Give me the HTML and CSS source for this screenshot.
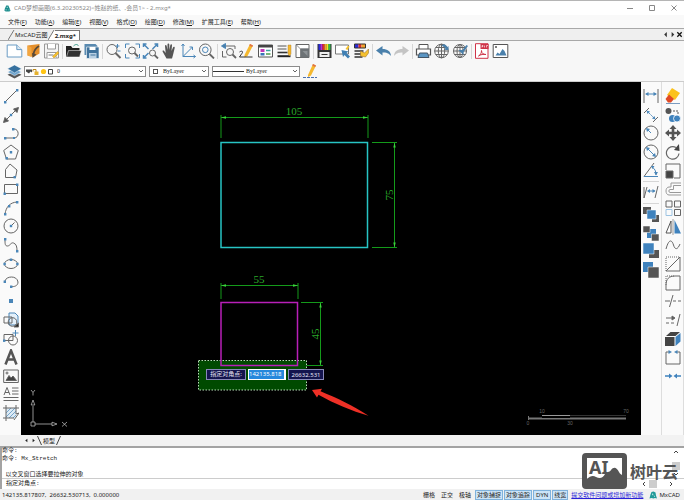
FILE: index.html
```html
<!DOCTYPE html>
<html lang="zh-CN">
<head>
<meta charset="utf-8">
<title>CAD梦想画图</title>
<link rel="stylesheet" href="styles.css">
</head>
<body>
<header class="titlebar">
  <svg class="app-logo" viewBox="0 0 16 16"><path fill="#1b8c8c" d="M2 8l3-7h5l3 7 2 5-3 2H4l-3-2z"/><path fill="#8fd0cf" d="M6 4h3v3H6zM3 10h4v2H3zM10 10h3v2h-3z"/></svg>
  <h1 class="title">CAD梦想画图(6.3.20230522)&lt;姓赵的纸、,会员1&gt; - 2.mxg*</h1>
  <div class="window-buttons">
    <button aria-label="最小化"><svg viewBox="0 0 8 8"><path d="M1 4.5h6"/></svg></button>
    <button aria-label="最大化"><svg viewBox="0 0 8 8"><path d="M1.5 1.5h5v5h-5z"/></svg></button>
    <button aria-label="关闭"><svg viewBox="0 0 8 8"><path d="M1.5 1.5l5 5m0-5l-5 5"/></svg></button>
  </div>
</header>
<nav class="menubar">
  <button>文件(<u>F</u>)</button><button>功能(<u>A</u>)</button><button>编辑(<u>E</u>)</button><button>视图(<u>V</u>)</button><button>格式(<u>O</u>)</button><button>绘图(<u>D</u>)</button><button>修改(<u>M</u>)</button><button>扩展工具(<u>E</u>)</button><button>帮助(<u>H</u>)</button>
</nav>
<div class="doctabs">
  <svg class="slant" viewBox="0 0 7 11"><path d="M0 11L6 1"/></svg>
  <button class="doctab">MxCAD云图</button>
  <svg class="slant slant-active" viewBox="0 0 7 11"><path class="fill" d="M0 11L6 1h1v10z"/><path d="M0 11L6 1"/></svg>
  <button class="doctab doctab-active">2.mxg*</button>
  <div class="doctab-nav">
    <button aria-label="上一个"><svg viewBox="0 0 8 8"><path d="M5.5 1v6L2.5 4z"/></svg></button>
    <button aria-label="下一个"><svg viewBox="0 0 8 8"><path d="M3 1v6l3-3z"/></svg></button>
    <button aria-label="关闭标签"><svg viewBox="0 0 8 8"><path class="bold" d="M1.5 1.5l5 5m0-5l-5 5"/></svg></button>
  </div>
</div>

<div class="toolbar" role="toolbar">
  <button aria-label="新建"><svg viewBox="0 0 16 16"><path d="M.7 2h9.6l5 4.6V14H.7z" fill="#fff" stroke="#6b9cc4"/><path d="M10.3 2v4.6h5" fill="#d9e8f4" stroke="#6b9cc4"/></svg></button>
  <button aria-label="打开云图"><svg viewBox="0 0 16 16"><path d="M2 2.500L14 1v9.500L8 14 2 12.500z" fill="#e58f2b"/><path d="M2 2.500l4 2V14l-4-1.500z" fill="#f2a640"/><path d="M13.500 3c-3 2-5 4.500-5.500 8" stroke="#5a4a38" stroke-width="1.800" fill="none"/><path d="M6.500 10l.5 5 4-3.500z" fill="#5a4a38"/></svg></button>
  <button aria-label="另存"><svg viewBox="0 0 16 16"><path d="M1 1h14v14H1z" fill="#f4f4f4" stroke="#999"/><path d="M4 1v5h8V1M3.500 15V9.500h9V15" fill="#fff" stroke="#999"/><path d="M5 12h5" stroke="#777"/><path d="M9 13.500l5-5 1.500 1.500-5 5z" fill="#f5c12e" stroke="#c08a1c" stroke-width=".5"/></svg></button>
  <i class="sep"></i>
  <button aria-label="打开"><svg viewBox="0 0 16 16"><path d="M.5 3h5l1.500 2h7v9H.5z" fill="#222"/><path d="M3 7.500h13L14 14H1z" fill="#333" stroke="#fff" stroke-width=".5"/><path d="M8 3c2-2 4-2 5 0" stroke="#3a9c8c" fill="none"/></svg></button>
  <button aria-label="保存"><svg viewBox="0 0 16 16"><path d="M1 1h11l2 2v9H1z" fill="#5a8ab0"/><path d="M3 4h12.500v11.500H3z" fill="#3f729c" stroke="#fff" stroke-width=".6"/><path d="M6 4h6v3H6z" fill="#fff"/><path d="M5.500 10h7.500v5H5.500z" fill="#b9d0e3"/><path d="M7 12h5" stroke="#3f729c"/></svg></button>
  <i class="sep"></i>
  <button aria-label="实时缩放"><svg viewBox="0 0 16 16" class="ln"><circle cx="6.500" cy="6.500" r="5"/><path d="M10 10l5 5" stroke-width="2"/><path d="M12 1v4M10 3h4M12 8h3" class="bl"/></svg></button>
  <button aria-label="窗口缩放"><svg viewBox="0 0 16 16" class="ln"><path d="M1 5V1h4M11 1h4v4M15 11v4h-4M5 15H1v-4" class="bl"/><circle cx="7.500" cy="7.500" r="3.500"/><path d="M10 10l3.500 3.500" stroke-width="2"/></svg></button>
  <button aria-label="全部缩放"><svg viewBox="0 0 16 16" class="ln"><path d="M1 4V1h3M1 1l5 5M12 1h3v3M15 1l-5 5M1 12v3h3M1 15l5-5" class="bl" stroke-width="1.500"/><circle cx="10" cy="10" r="3"/><path d="M12 12l3.500 3.500" stroke-width="1.800"/></svg></button>
  <button aria-label="平移"><svg viewBox="0 0 16 16"><path d="M5 15.500L1.200 8.800c-.6-1.300.8-1.700 1.500-.8L4.200 10 3.500 3c0-1.300 1.500-1.300 1.700 0L6 7V1.500c0-1.500 1.700-1.500 1.800 0V7l1-4.800c.3-1.300 1.800-1 1.700.3L10 8l1.500-3.500c.6-1.200 2-.6 1.700.6L11.500 12l-1 3.500z" fill="#555"/></svg></button>
  <button aria-label="坐标系"><svg viewBox="0 0 16 16" class="ln"><path d="M2.500 1v12.500H15M1 3l1.500-2L4 3M13 12l2 1.500-2 1.500" class="bl"/><path d="M2.500 13.500L12 4M9 4h3v3" class="bl"/></svg></button>
  <button aria-label="范围缩放"><svg viewBox="0 0 16 16" class="ln"><circle cx="6.800" cy="6.800" r="5.800"/><circle cx="6.800" cy="6.800" r="2.800" class="bl"/><path d="M11 11l4.500 4.500" stroke-width="1.800"/></svg></button>
  <i class="sep"></i>
  <button aria-label="上一视图"><svg viewBox="0 0 16 16" class="ln"><path d="M2 8v6h4M14.500 6V3H3" /><path d="M5 .5L1 3l4 2.500z" fill="#4a7fa8" class="bl"/><circle cx="9.500" cy="9" r="3.500"/><path d="M12 11.500l3.500 3.500" stroke-width="1.800"/></svg></button>
  <button aria-label="编辑"><svg viewBox="0 0 16 16"><path d="M6 12L11.500 1l3 1.500L9 13l-3 1.500z" fill="#f5b82e"/><path d="M11.500 1l3 1.500-.8 1.600-3-1.500z" fill="#e0704b"/><path d="M1 9c3-2 4 0 2 2l-2 3h13" stroke="#333" fill="none"/></svg></button>
  <button aria-label="图层特性"><svg viewBox="0 0 16 16"><path d="M1 2h14v12H1z" fill="#fff" stroke="#555"/><path d="M1 2h14v2.500H1z" fill="#444"/><path d="M3 6h4v3H3z" fill="#c237b8"/><path d="M3 10h4v2.500H3z" fill="#3874b8"/><path d="M8.500 7.500H13" stroke="#3aa6a0" stroke-width="1.500"/><path d="M8.500 11H13" stroke="#4b9c4b" stroke-width="1.500"/></svg></button>
  <button aria-label="线型"><svg viewBox="0 0 16 16"><path d="M1 3h9M1 6h9" stroke="#555"/><path d="M1 9.500h10" stroke="#333" stroke-width="1.600"/><path d="M1 13.200h13" stroke="#222" stroke-width="2"/><path d="M11.500 2h3v9l-1.500 2-1.500-2z" fill="#f5b82e" stroke="#a3732a" stroke-width=".4"/></svg></button>
  <button aria-label="图块"><svg viewBox="0 0 16 16"><path d="M1.500 1.500h13v13h-13z" fill="#fff" stroke="#666"/><path d="M2 2l4 4v8.500M6 6h8.500" fill="none" stroke="#666" stroke-width=".7"/><path d="M6 5.500h8.500v9H6z" fill="#6d7276"/><path d="M8 8h5v5z" fill="#8d9296"/></svg></button>
  <i class="sep"></i>
  <button aria-label="颜色"><svg viewBox="0 0 16 16"><path d="M1 1h14v14H1z" fill="#333"/><path d="M2 1h2v6H2z" fill="#2b2bd8"/><path d="M4 1h2v6H4z" fill="#b92bd8"/><path d="M6 1h2v6H6z" fill="#e02b2b"/><path d="M8 1h2v6H8z" fill="#f2a22b"/><path d="M10 1h2v6h-2z" fill="#f2e52b"/><path d="M12 1h2v6h-2z" fill="#2bbf4c"/><path d="M3 9h10v5H3z" fill="#eee"/><path d="M5 11.500h6" stroke="#333"/></svg></button>
  <button aria-label="选择"><svg viewBox="0 0 16 16"><path d="M1 2h13v9H1z" fill="#fff" stroke="#777"/><path d="M7 7l7 1.500-2 1.500 3.500 3.500-2 2L10 12l-1.500 2z" fill="#3f7fb3"/><path d="M11 6l2.500-3.500 1.500 1-2 3.500z" fill="#f5c12e"/></svg></button>
  <button aria-label="格式刷"><svg viewBox="0 0 16 16"><path d="M1 1h4v4H1z" fill="#2b2bd8"/><path d="M5 1h3v4H5z" fill="#d82b2b"/><path d="M8 1h4v4H8z" fill="#f2a22b"/><path d="M1 1h11v4H1z" fill="none" stroke="#333"/><path d="M1 8h9M1 11h7M1 14h8" stroke="#333" stroke-width="1.500"/><path d="M7 8l4 2 4-4v4l-3 4-5-1z" fill="#f5c12e" stroke="#a3732a" stroke-width=".6"/></svg></button>
  <i class="sep"></i>
  <button aria-label="撤销"><svg viewBox="0 0 16 16"><path d="M.5 7.500L7 3v3c5 0 8 2 8.500 7C13 10 11 9.500 7 9.500v3z" fill="#4a80ab"/></svg></button>
  <button aria-label="重做"><svg viewBox="0 0 16 16"><path d="M15.500 7.500L9 3v3C4 6 1 8 .5 13 3 10 5 9.500 9 9.500v3z" fill="#c4c4c4"/></svg></button>
  <i class="sep"></i>
  <button aria-label="打印"><svg viewBox="0 0 16 16"><path d="M3.500 6V1.500h9V6" fill="#fff" stroke="#555"/><path d="M1 6h14v6H1z" fill="#fff" stroke="#555" stroke-width="1.200"/><path d="M4 10h8l1.500 4.500h-11z" fill="#5b96c4" stroke="#456"/></svg></button>
  <button aria-label="网络发布"><svg viewBox="0 0 16 16" class="ln"><circle cx="8" cy="8" r="6.800"/><ellipse cx="8" cy="8" rx="3.200" ry="6.800"/><path d="M1 8h14M8 1v14M2.200 4.500h11.600M2.200 11.500h11.600"/><path d="M8 3c2-3 4-2 6 1l1-1v4h-4l1-1C11 4 10 3 8 3z" fill="#4a80ab" stroke="none"/></svg></button>
  <button aria-label="网络打开"><svg viewBox="0 0 16 16" class="ln"><circle cx="7.500" cy="8" r="6.500"/><ellipse cx="7.500" cy="8" rx="3" ry="6.500"/><path d="M1 8h13M7.500 1.500v13M2 4.500h11M2 11.500h11"/><path d="M6 7h4l4-5 1.500 1L11 9v3z" fill="#4a80ab" stroke="none"/></svg></button>
  <i class="sep"></i>
  <button aria-label="输出PDF"><svg viewBox="0 0 16 16"><path d="M2 .7h12.500v14.600H2z" fill="#fff" stroke="#cf3348"/><path d="M7 1h8v5H7z" fill="#cf3348"/><path d="M8.500 4.500v-2h1v1h-1M11 2.500v2M13 4.500v-2h1.500" stroke="#fff" stroke-width=".6" fill="none"/><path d="M5 13c2-1 3-3 3-5.500 0 3 2 4 4.500 4C10 11 7 11.500 5 13z" fill="none" stroke="#cf3348"/></svg></button>
  <button aria-label="输出图片"><svg viewBox="0 0 16 16"><path d="M.7 1.500h14.600v13H.7z" fill="#fff" stroke="#555"/><circle cx="3.500" cy="4" r="1" fill="#555"/><path d="M3 12.500l2-3 2 1.500 3-5 2 2 2 4.500z" fill="#4a80ab"/></svg></button>
</div>

<div class="propbar">
  <button class="layers" aria-label="图层"><svg viewBox="0 0 16 16"><path d="M8 8l7.500 3.500L8 15.500.5 11.500z" fill="#555"/><path d="M8 5l7.500 3.500L8 12.500.5 8.500z" fill="#6fa4cd" stroke="#fff" stroke-width=".5"/><path d="M8 1l7.500 4L8 9.500.5 5z" fill="#36719f" stroke="#fff" stroke-width=".5"/></svg></button>
  <label class="combo combo-layer">
    <svg class="layer-state" viewBox="0 0 30 9"><path d="M1 2.500h6v3l-1.500-1L4 6.500 1 4.500z" fill="#444"/><path d="M8 4.500V2.500h3V5" stroke="#b9861a" fill="none"/><path d="M9.500 4.500h4v3.500h-4z" fill="#e5b12c"/><circle cx="18.500" cy="4.500" r="2.600" fill="#ffc414"/><path d="M23.500 2.500h4v4.500h-4z" fill="#fff" stroke="#444"/></svg>
    <select aria-label="图层"><option>0</option></select>
    <svg class="chevron" viewBox="0 0 8 8"><path d="M2 3l2 2 2-2"/></svg>
  </label>
  <label class="combo combo-color"><span class="swatch"></span><select aria-label="颜色"><option>ByLayer</option></select><svg class="chevron" viewBox="0 0 8 8"><path d="M2 3l2 2 2-2"/></svg></label>
  <label class="combo combo-line"><span class="stroke"></span><select aria-label="线型"><option>ByLayer</option></select><svg class="chevron" viewBox="0 0 8 8"><path d="M2 3l2 2 2-2"/></svg></label>
  <button class="pen" aria-label="画笔"><svg viewBox="0 0 16 16"><path d="M6 12L11 1l3 1.500L9 12.500 6 14z" fill="#f5b82e"/><path d="M11 1l3 1.500-.8 1.600-3-1.500z" fill="#e0704b"/><path d="M1 14.500h14" stroke="#4a70b0" stroke-dasharray="3 1"/></svg></button>
</div>

<main class="workspace">
  <div class="toolcol draw">
    <button aria-label="直线"><svg viewBox="0 0 16 16" class="ln"><path d="M2 14L14 2"/><path class="pt" d="M1 13h2.400v2.400H1zM13 1h2.400v2.400H13z"/></svg></button>
    <button aria-label="构造线"><svg viewBox="0 0 16 16" class="ln"><path d="M2 14L14 2"/><path d="M.5 15.500l1.500-5L5.500 14zM15.500.5l-5 1.500L14 5.500z" fill="#555"/><path class="pt" d="M6.800 6.800h2.400v2.400H6.800z"/></svg></button>
    <button aria-label="多段线"><svg viewBox="0 0 16 16" class="ln"><path d="M2 13h9c5.500 0 5.500-9 0-9h-1"/><path class="pt" d="M1 12h2.400v2.400H1zM9 3h2.400v2.400H9zM10 12h2v2h-2z"/></svg></button>
    <button aria-label="正多边形"><svg viewBox="0 0 16 16" class="ln"><path d="M8 1l7.300 5.500L12.500 15h-9L.7 6.500z"/><path class="pt" d="M6.800 7h2.400v2.400H6.800zM2.500 13h2.400v2.400H2.500z"/></svg></button>
    <button aria-label="多边形"><svg viewBox="0 0 16 16" class="ln"><path d="M2.500 14.500v-8L7 1l7 6-1.500 7.500z"/><path class="pt" d="M10.500 13h2.400v2.400h-2.400z"/></svg></button>
    <button aria-label="矩形"><svg viewBox="0 0 16 16" class="ln"><path d="M1.500 3.500h13v9h-13z"/><path class="pt" d="M.5 11.500h2.400v2.400H.5zM13 2.500h2.400v2.400H13z"/></svg></button>
    <button aria-label="圆弧"><svg viewBox="0 0 16 16" class="ln"><path d="M2 14C3 7 7 2.500 14 2"/><path class="pt" d="M1 13h2.400v2.400H1zM13 1h2.400v2.400H13zM5 5h2.400v2.400H5z"/></svg></button>
    <button aria-label="圆"><svg viewBox="0 0 16 16" class="ln"><circle cx="8" cy="8" r="7"/><path d="M8 8l3.500-3.500"/><path class="pt" d="M6.800 6.800h2.400v2.400H6.800z"/></svg></button>
    <button aria-label="样条曲线"><svg viewBox="0 0 16 16" class="ln"><path d="M2 2c0 5 0 7 2.500 7S8 5 10.500 6c3 1 3.500 4 3.500 8"/><path class="pt" d="M1 1h2.400v2.400H1zM13 13h2.400v2.400H13z"/></svg></button>
    <button aria-label="椭圆"><svg viewBox="0 0 16 16" class="ln"><ellipse cx="8" cy="8" rx="6.500" ry="4.500"/><path class="pt" d="M.4 6.800h2.400v2.400H.4zM13.200 6.800h2.400v2.400h-2.400zM6.800 2.500h2.400v2.400H6.800z"/></svg></button>
    <button aria-label="椭圆弧"><svg viewBox="0 0 16 16" class="ln"><path d="M2 7c1-5 12-6 13 1 0 4-4 5-7 4.500"/><path class="pt" d="M.6 6.500H3v2.400H.6zM7 11.500h2.400v2.400H7z"/></svg></button>
    <button aria-label="点"><svg viewBox="0 0 16 16"><path d="M6 6h4v4H6z" fill="#4a86b8"/></svg></button>
    <button aria-label="插入块"><svg viewBox="0 0 16 16" class="ln"><path d="M6 1h6l3 3v9H6z" fill="#e4f0fa" class="bl"/><path d="M1 5h8v6H1z"/><circle cx="9.500" cy="10" r="4.300"/><path d="M11 15h4.500v-4z" fill="#222"/></svg></button>
    <button aria-label="创建块"><svg viewBox="0 0 16 16" class="ln"><path d="M1 4.500h9v6H1z"/><circle cx="10" cy="10.500" r="4.500"/><path d="M12.500 0v6M9.500 3h6" class="bl"/><path class="pt" d="M0 9.500h2.400v2.400H0z"/></svg></button>
    <button aria-label="文字"><svg viewBox="0 0 16 16" fill="none" stroke="#555" stroke-width="2.500"><path d="M2.500 15.500L8 1.500l5.500 14M4.500 10.500h7"/></svg></button>
    <button aria-label="图像"><svg viewBox="0 0 16 16" class="ln"><path d="M.7 2h14.600v12.500H.7z"/><circle cx="4" cy="5" r="1"/><path d="M3 12.500l3-5 2 2.500 2-2 3.500 4.500z" fill="#444"/></svg></button>
    <button aria-label="多行文字"><svg viewBox="0 0 16 16" class="ln"><path d="M1 9L4 1.500 7 9M2 6.500h4M9 2h6.500M9 5h6.500M9 8h6.500M.5 11.500h15M.5 14.500h15"/></svg></button>
    <button aria-label="填充"><svg viewBox="0 0 16 16" class="ln"><path d="M3 3h10v10H3z" fill="#dceaf5" stroke="none"/><path d="M3 8l5-5M3 12l9-9M6 13l7-7M10 13l3-3" class="bl" stroke-width=".7"/><path d="M3 0v16M0 3h16M0 13h11M13 0v9l3-1-5 7"/></svg></button>
  </div>

  <section class="canvas">
    <svg class="drawing" viewBox="21 82 620 352" preserveAspectRatio="xMinYMin meet">
      <g class="dim">
        <path d="M221 138v-23M368 138v-23M221 117.500h147M372 142.500h25M372 247.500h25M394.500 142v105"/>
        <path d="M221 299v-16M298 299v-16M221 285.500h77M301 302.500h22M301 365.500h22M320.500 302v63"/>
        <path class="tip" d="M221 117.500l5-1.200v2.400zM368 117.500l-5-1.200v2.400zM394.500 142.500l-1.200 5h2.400zM394.500 247.500l-1.200-5h2.400zM221 285.500l5-1.200v2.400zM298 285.500l-5-1.200v2.400zM320.500 302.500l-1.200 5h2.400zM320.500 365.500l-1.200-5h2.400z"/>
        <text x="294" y="115">105</text>
        <text x="259" y="283">55</text>
        <text transform="translate(393 195) rotate(-90)">75</text>
        <text transform="translate(319 334) rotate(-90)">45</text>
      </g>
      <path class="big" d="M221 142.500h146.500v105H221z"/>
      <path class="selection" d="M198.500 360.500h108v29.500h-108z"/>
      <path class="small" d="M221 302.500h76.500v63H221z"/>
      <path class="arrow" d="M312 390l10-1.300-1.500 2.600c17 7 32 14 48 24.500-17-5-34-12-50-21l-1.500 2.700z"/>
      <path class="ucs" d="M31 422h4v4h-4zM33 422v-16M33 400l-1.800 5h3.600zM35 424h17M57 424l-5-1.800v3.600zM31 390l2 2.500 2-2.500M33 392.500v3M62 422l5 4.500M67 422l-5 4.500"/>
    </svg>
    <form class="dyn">
      <label for="dx">指定对角点:</label>
      <span class="focus"><input id="dx" value="142135.818"></span>
      <input class="dy" aria-label="Y" value="26632.531">
    </form>
    <svg class="scale" viewBox="0 0 106 22"><path d="M3.500 11v4" stroke="#777"/><path d="M3 13.500h98" stroke="#777" stroke-width="2"/><path d="M17 10.500h28" stroke="#999"/><path d="M45 10.500h56" stroke="#333"/><path d="M17 12h28" stroke="#000" stroke-width="2"/><text x="17" y="8">10</text><text x="101" y="8">70</text><text x="3" y="20">0</text><text x="45" y="20">30</text></svg>
  </section>

  <div class="toolcol dims">
    <button aria-label="线性标注"><svg viewBox="0 0 16 16" class="ln"><path d="M1 1v14M15 1v14"/><path d="M3 6h10" class="bl"/><path class="pt" d="M2 6l3.500-2v4zM14 6l-3.500-2v4z"/></svg></button>
    <button aria-label="对齐标注"><svg viewBox="0 0 16 16" class="ln"><path d="M1 6l5-5M10 15l5-5"/><path d="M4 4l8 8" class="bl" stroke-dasharray="2 1"/><path class="pt" d="M3.500 3.500l3.500 1-2.500 2.500zM12.500 12.500l-3.500-1 2.500-2.500z"/></svg></button>
    <button aria-label="半径标注"><svg viewBox="0 0 16 16" class="ln"><circle cx="8" cy="8" r="7"/><path d="M8 8L4 4" class="bl"/><path class="pt" d="M3 3l4 1-3 3z"/></svg></button>
    <button aria-label="直径标注"><svg viewBox="0 0 16 16" class="ln"><circle cx="8" cy="8" r="7"/><path d="M4 4l8 8" class="bl"/><path class="pt" d="M3 3l4 1-3 3zM13 13l-4-1 3-3z"/></svg></button>
    <button aria-label="角度标注"><svg viewBox="0 0 16 16" class="ln"><path d="M11 1L1 14.500"/><path d="M1 14.500h14M9 5c3 2 4 4 4 8" class="bl"/><path class="pt" d="M8 4h3.500l-2 3zM11 10h4l-2 3.500z"/></svg></button>
    <i class="sep"></i>
    <button aria-label="倾斜标注"><svg viewBox="0 0 16 16" class="ln"><path d="M1 3v11M15 2l-3 12M4 3L1 14"/><path d="M5 7h7" class="bl"/><path class="pt" d="M4 7l3-2v4zM12.500 7l-3-2v4z"/></svg></button>
    <i class="sep"></i>
    <button aria-label="前置"><svg viewBox="0 0 16 16"><path d="M0 1h8v7H0zM9 9h7v7H9z" fill="#555"/><path d="M4 4h9v9H4z" fill="#3f82bd" stroke="#fff" stroke-width=".5"/></svg></button>
    <button aria-label="后置"><svg viewBox="0 0 16 16"><path d="M4 4h9v9H4z" fill="#3f82bd"/><path d="M0 1h7v6.500H0zM8.500 9H16v7H8.500z" fill="#555" stroke="#fff" stroke-width=".5"/></svg></button>
    <button aria-label="置于对象之上"><svg viewBox="0 0 16 16"><path d="M6 7h10v8H6z" fill="#555"/><path d="M0 0h11v11H0z" fill="#3f82bd" stroke="#fff" stroke-width=".5"/></svg></button>
    <button aria-label="置于对象之下"><svg viewBox="0 0 16 16"><path d="M0 0h10v10H0z" fill="#3f82bd"/><path d="M5 5h11v11H5z" fill="#555" stroke="#fff" stroke-width=".5"/></svg></button>
  </div>
  <div class="toolcol modify">
    <button aria-label="删除"><svg viewBox="0 0 16 16"><path d="M7 0l8 5-5 7-8-5z" fill="#fbc21d"/><path d="M4 6.500l5 4.500-3 3.500H3L.5 11z" fill="#e04a26"/><path d="M1 15.500h14" stroke="#7a9cc0"/></svg></button>
    <button aria-label="复制"><svg viewBox="0 0 16 16"><circle cx="3.500" cy="4" r="3" fill="#555"/><circle cx="7.500" cy="11.500" r="3.500" fill="#3f82bd"/><circle cx="12" cy="11.500" r="3.500" fill="#3f82bd" stroke="#fff" stroke-width=".8"/><path d="M8 4h5v3" stroke="#555" stroke-dasharray="2 1" fill="none"/></svg></button>
    <button aria-label="移动"><svg viewBox="0 0 16 16"><path d="M8 0l3.500 4H9.300v2.700H12V4.500L16 8l-4 3.500V9.300H9.300V12h2.200L8 16l-3.500-4h2.200V9.300H4v2.200L0 8l4-3.500v2.200h2.700V4H4.500z" fill="#555"/></svg></button>
    <button aria-label="旋转"><svg viewBox="0 0 16 16"><path d="M11 3.500A6.300 6.300 0 1 0 14 9.500" fill="none" stroke="#666" stroke-width="1.200"/><path d="M9 6l5-6 .5 7z" fill="#444"/></svg></button>
    <button aria-label="缩放"><svg viewBox="0 0 16 16" class="ln"><path d="M1 7V1h14v14H9"/><path d="M1 8h7v7H1z" fill="#444"/></svg></button>
    <button aria-label="偏移"><svg viewBox="0 0 16 16" fill="none" stroke="#999"><path d="M16 2H6v4H4c-4 0-4 8 0 8h12M16 4.500H8.500v4H5c-1.500 0-1.500 3 0 3h11"/></svg></button>
    <button aria-label="阵列"><svg viewBox="0 0 16 16" class="ln"><path d="M1 1h6v6H1zM9.500 1h6v6h-6zM9.500 9.500h6v6h-6z"/><path d="M1 9.500h6v6H1z" stroke="#9cc3e2"/></svg></button>
    <button aria-label="镜像"><svg viewBox="0 0 16 16"><path d="M6 2v12H1z" fill="#fff" stroke="#555"/><path d="M9.500 1v13.500H16z" fill="#3f82bd"/><path d="M8 0v16" stroke="#777" stroke-width=".7"/></svg></button>
    <button aria-label="编辑样条"><svg viewBox="0 0 16 16" class="ln"><path d="M1 12C4 1 7 3 8.500 8s4 5 6.500-1"/></svg></button>
    <button aria-label="倒角"><svg viewBox="0 0 16 16" class="ln"><path d="M15 1v14H1M1 15L15 1"/><path d="M1 15V1h14" stroke-dasharray="1 1"/></svg></button>
    <button aria-label="圆角"><svg viewBox="0 0 16 16" class="ln"><path d="M15 1v14H1v-5c0-6 3-9 9-9h5"/><path d="M1 10V1h9" stroke-dasharray="1 1"/></svg></button>
    <button aria-label="修剪"><svg viewBox="0 0 16 16" class="ln"><path d="M0 8h5M8 2L4.500 14"/><path d="M8 8h8" stroke-dasharray="3 2"/></svg></button>
    <button aria-label="延伸"><svg viewBox="0 0 16 16" class="ln"><path d="M15 2l-3 12M1 6h7"/><path d="M7 4l3 2-3 2z" fill="#555"/><path d="M1 11h9" stroke-dasharray="3 2"/></svg></button>
    <button aria-label="三维"><svg viewBox="0 0 16 16"><path d="M0 6h9.500v9H0z" fill="#444"/><path d="M1 5l4.500-4H15l-4.500 4z" fill="#444"/><path d="M10.500 6L15.500 2v8.500l-5 4.500z" fill="#3f82bd"/></svg></button>
    <button aria-label="打断"><svg viewBox="0 0 16 16" class="ln"><path d="M5 3H1v12h14V3h-4"/><path class="pt" d="M3.500 1v4L7 3zM12.500 1v4L9 3z"/></svg></button>
    <button aria-label="合并"><svg viewBox="0 0 16 16"><path d="M0 8h5M11 8h5" stroke="#3f82bd" stroke-width="1.300"/><path d="M4 5.500L7.500 8 4 10.500zM12 5.500L8.500 8l3.500 2.500z" fill="#3f82bd"/></svg></button>
  </div>
</main>

<div class="layouts">
  <button aria-label="向左"><svg viewBox="0 0 8 8"><path d="M5 2v4L2.500 4z"/></svg></button>
  <button aria-label="向右"><svg viewBox="0 0 8 8"><path d="M3 2v4l2.500-2z"/></svg></button>
  <svg class="edge" viewBox="0 0 5 10"><path d="M.5 0l4 9"/></svg>
  <button class="layout-tab">模型</button>
  <svg class="edge" viewBox="0 0 5 10"><path d="M4.500 0l-4 9"/></svg>
</div>

<section class="command">
  <div class="history">
    <pre class="log">命令:
命令: Mx_Stretch

 以交叉窗口选择要拉伸的对象</pre>
    <div class="vscroll"><svg viewBox="0 0 8 8"><path d="M2 5l2-2 2 2"/></svg><i></i><svg viewBox="0 0 8 8"><path d="M2 3l2 2 2-2"/></svg></div>
  </div>
  <div class="prompt">
    <label for="cmd">指定对角点:</label><input id="cmd">
    <div class="hscroll"><svg viewBox="0 0 8 8"><path d="M5 2L3 4l2 2"/></svg><i></i><svg viewBox="0 0 8 8"><path d="M3 2l2 2-2 2"/></svg></div>
  </div>
  <div class="watermark">
    <svg viewBox="0 0 45 36"><path fill="#555" fill-rule="evenodd" d="M4 0h37a4 4 0 0 1 4 4v28a4 4 0 0 1-4 4H4a4 4 0 0 1-4-4V4a4 4 0 0 1 4-4zM5 5v21c3-3 6-4 9-2 4 2 7 1 9-3 2-3 4-1 6-4 3-4 6-2 8 2 1 2 2 2 3 3V5z"/><text x="7" y="21">AI</text></svg>
    <span>树叶云</span>
  </div>
</section>

<footer class="status">
  <output class="coords">142135.817807,&nbsp; 26632.530713,&nbsp; 0.000000</output>
  <button>栅格</button><button>正交</button><button>极轴</button>
  <div class="toggles"><button>对象捕捉</button><button>对象追踪</button><button class="wide">DYN</button><button>线宽</button></div>
  <a href="#">提交软件问题或增加新功能</a>
  <span class="brand"><svg viewBox="0 0 16 16"><path fill="#1f9a98" d="M1 15l2-8 2-5 4-1 4 2 1 6 2 6-4-1-3 1-4-1z"/><path fill="#e9f6f6" d="M6 5l3 1-2 3zM9 9l3 1-1 2z"/></svg>MxCAD</span>
</footer>
</body>
</html>
```
FILE: styles.css
```css
* { box-sizing: border-box; }
body {
  margin: 0;
  height: 100vh;
  display: flex;
  flex-direction: column;
  overflow: hidden;
  background: #f0f0f0;
  color: #222;
  font: 6px/8px "Noto Sans", "Noto Sans CJK SC", sans-serif;
  white-space: nowrap;
}
button, input, select {
  margin: 0;
  padding: 0;
  border: 0;
  background: none;
  color: inherit;
  font: inherit;
  border-radius: 0;
}
button { display: flex; align-items: center; justify-content: center; }
svg { display: block; flex: none; }

.titlebar {
  display: flex;
  align-items: center;
  height: 15px;
  padding: 0 6px 0 4px;
  gap: 3px;
  border-top: 1px solid #b5b5b5;
  background: #fff;
}
.app-logo { width: 7px; height: 7px; }
.title { margin: 0; font-size: 6px; font-weight: 400; color: #888; }
.window-buttons { display: flex; gap: 14px; margin-left: auto; }
.window-buttons svg { width: 8px; height: 8px; fill: none; stroke: #888; stroke-width: 1; }

.menubar {
  display: flex;
  align-items: center;
  gap: 8px;
  height: 13px;
  padding: 0 8px;
  background: #f9f9f9;
}

.doctabs {
  display: flex;
  align-items: flex-end;
  height: 13px;
  padding-left: 8px;
  border-top: 1px solid #a8a8a8;
  border-bottom: 1px solid #a8a8a8;
  background: #efefef;
}
.slant { width: 7px; height: 11px; fill: none; stroke: #777; }
.slant .fill { fill: #fff; stroke: none; }
.doctab { height: 11px; }
.doctab-active { height: 10px; padding: 0 3px 0 0; border-top: 1px solid #777; border-right: 1px solid #777; background: #fff; font-weight: 700; }
.doctab-nav { display: flex; margin-left: auto; padding: 0 1px 2px 0; }
.doctab-nav svg { width: 7px; height: 7px; fill: #333; }
.doctab-nav .bold { stroke: #111; stroke-width: 1.5; }

.toolbar {
  display: flex;
  align-items: center;
  justify-content: space-between;
  height: 20px;
  max-width: 509px;
  padding-left: 6px;
}
.toolbar, .propbar { background: #f7f7f7; }
.toolbar { box-shadow: 509px 0 #f7f7f7; }
.toolbar button, .toolbar svg { width: 17px; height: 16px; }
.sep { flex: none; width: 1px; height: 15px; background: #d6d6d6; }
.ln { fill: none; stroke: #666; stroke-width: 1; }
.ln .bl { stroke: #4a86b8; }
.ln .pt { fill: #4a86b8; stroke: none; }

.propbar {
  display: flex;
  align-items: center;
  gap: 3px;
  height: 21px;
  padding: 0 7px;
  border-bottom: 1px solid #ccc;
}
.layers svg { width: 15px; height: 15px; }
.pen { margin-left: -1px; }
.pen svg { width: 16px; height: 16px; }
.combo {
  display: flex;
  align-items: center;
  height: 11px;
  border: 1px solid #8c8c8c;
  background: #fff;
}
.combo-layer { width: 122px; margin-left: -1px; }
.combo-color { width: 60px; }
.combo-line { width: 88px; }
.layer-state { width: 30px; height: 9px; }
.swatch { flex: none; width: 5px; height: 5px; margin: 0 3px; border: 1px solid #555; }
.stroke { flex: none; width: 31px; height: 1px; background: #333; }
.combo select {
  flex: 1;
  min-width: 0;
  height: 9px;
  appearance: none;
  padding-left: 2px;
  font: 6px/9px "Liberation Serif", serif;
}
.chevron { width: 8px; height: 8px; fill: none; stroke: #666; pointer-events: none; }

.workspace { display: flex; flex: 1; min-height: 0; background: #f7f7f7; }
.toolcol {
  display: flex;
  flex-direction: column;
  align-items: center;
  justify-content: space-between;
  width: 21px;
  padding: 6px 0 14px;
  background: #fafafa;
}
.toolcol svg { width: 16px; height: 16px; }
.toolcol .sep { width: 16px; height: 1px; }
.dims { padding-bottom: 157px; border-right: 1px solid #ddd; }
.modify { width: 22px; padding-bottom: 51px; border-right: 1px solid #ddd; }

.canvas { position: relative; flex: 1; background: #000; overflow: hidden; }
.drawing { position: absolute; inset: 0; width: 100%; height: 100%; fill: none; }
.dim { stroke: #149a1a; }
.dim .tip { fill: #3bd33b; stroke: none; }
.dim text { fill: #2aa82a; stroke: none; font: 11px "Liberation Sans Narrow", "Liberation Serif", serif; text-anchor: middle; }
.big { stroke: #27c4c4; stroke-width: 1.5; }
.small { stroke: #b81fb8; stroke-width: 1.5; }
.selection { fill: #004a00; stroke: #b8ddb8; stroke-dasharray: 1.5 1.5; }
.arrow { fill: #ee3026; }
.ucs { stroke: #b5b5b5; stroke-width: .8; }
.dyn {
  position: absolute;
  left: 185px;
  top: 287px;
  display: flex;
  gap: 2px;
  color: #e4e4f4;
  line-height: 9px;
}
.dyn label, .dyn .dy { height: 11px; border: 1px solid #8888b8; background: #14144e; text-align: center; }
.dyn label { width: 40px; }
.dyn .focus { width: 38px; height: 11px; padding: 1px 2px 1px 1px; background: #fff; }
.dyn .focus input { display: block; width: 35px; height: 9px; background: #2688dc; color: #fff; }
.dyn .dy { width: 36px; }
.scale { position: absolute; right: 10px; bottom: 8px; width: 106px; height: 22px; }
.scale text { fill: #666; font: 5px "Liberation Sans", sans-serif; text-anchor: middle; }

.layouts { display: flex; align-items: center; height: 11px; padding-left: 23px; background: #f2f2f2; }
.layouts button svg { width: 7px; height: 7px; fill: #222; }
.edge { width: 5px; height: 10px; fill: none; stroke: #444; }
.layout-tab { padding: 0 1px; }

.command {
  position: relative;
  border-top: 2px solid #a3a3a3;
  border-left: 2px solid #a3a3a3;
  background: #fff;
  font-family: "Liberation Mono", "Noto Sans CJK SC", monospace;
}
.history { display: flex; height: 31px; border-bottom: 1px solid #ccc; }
.log { flex: 1; height: 32px; margin: -1px 0 0; font: inherit; }
.vscroll { display: flex; flex-direction: column; align-items: center; justify-content: space-between; width: 16px; background: #fff; }
.vscroll i { width: 8px; height: 8px; margin-top: 5px; background: #cdcdcd; }
.vscroll svg, .hscroll svg { width: 8px; height: 8px; fill: none; stroke: #444; }
.prompt { display: flex; align-items: center; height: 10px; padding-left: 4px; }
.prompt input { flex: 1; min-width: 0; height: 8px; outline: 0; }
.hscroll { display: flex; align-items: center; width: 44px; }
.hscroll i { width: 8px; height: 8px; margin: 0 10px 0 1px; background: #cdcdcd; }
.watermark {
  position: absolute;
  right: 6px;
  top: 5px;
  display: flex;
  align-items: center;
  gap: 3px;
  color: #555;
  font: 700 16px/20px "Noto Sans CJK SC", sans-serif;
}
.watermark svg { width: 45px; height: 36px; }
.watermark text { fill: #555; font: 700 18px "Noto Sans", sans-serif; }

.status { display: flex; align-items: center; height: 11px; padding: 0 4px 0 2px; gap: 6px; background: #f1f1f1; }
.coords { margin-right: auto; }
.toggles { display: flex; gap: 1px; margin-left: -2px; }
.toggles button { height: 10px; padding: 0 1px; border: 1px solid #7fb2dc; background: #cce4f7; }
.toggles .wide { padding: 0 2px; }
.status a { margin-left: -3px; color: #2a1fd8; }
.brand { display: flex; align-items: center; gap: 2px; }
.brand svg { width: 8px; height: 8px; }
```
